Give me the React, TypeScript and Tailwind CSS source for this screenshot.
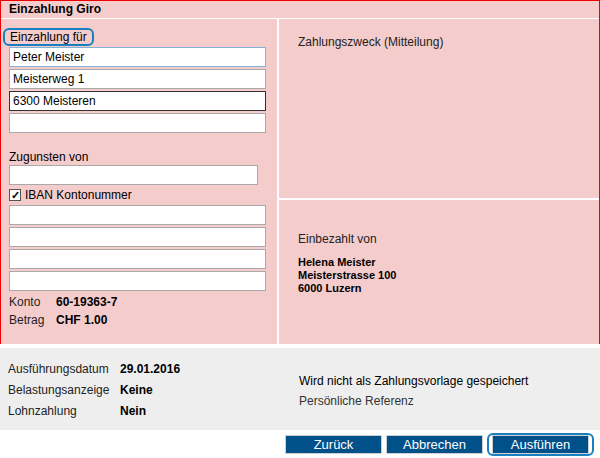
const font = { fontFamily: '"Liberation Sans", Arial, sans-serif' };

function Field({ value = '', w = 'w-[257px]', border = 'border-[#a9a9a9]' }: { value?: string; w?: string; border?: string }) {
  return (
    <div className={`${w} h-[20px] bg-white border ${border} px-[3px] text-[12px] leading-[18px] text-black`}>{value}</div>
  );
}

export default function App() {
  return (
    <div style={font} className="w-[600px] h-[458px] bg-white text-[12px] text-[#222] overflow-hidden">
      <div className="bg-[#f4cccc] border-t border-l border-r border-[#e00] ">
        <div className="h-[18px] px-[8px] font-bold text-[12px] leading-[16px] text-black border-b border-white">Einzahlung Giro</div>
        <div className="flex h-[325px]">
          <div className="w-[278px] border-r-2 border-white pl-[8px] pt-[9px]">
            <div className="relative w-fit -ml-[6px] px-[5px] border-2 border-[#1a7fc1] rounded-[6px] leading-[14px] text-black">Einzahlung für</div>
            <div className="flex flex-col gap-[2px] mt-[1px]">
              <Field value="Peter Meister" border="border-[#7fb2d6]" />
              <Field value="Meisterweg 1" />
              <Field value="6300 Meisteren" border="border-[#333]" />
              <Field />
            </div>
            <div className="mt-[17px] leading-[14px] text-black">Zugunsten von</div>
            <div className="mt-[1px]"><Field w="w-[249px]" /></div>
            <div className="flex items-center gap-[4px] mt-[3px] h-[14px] text-black">
              <span className="w-[12px] h-[12px] bg-white border border-[#555] flex items-center justify-center text-[11px] font-bold leading-none">✓</span>
              IBAN Kontonummer
            </div>
            <div className="flex flex-col gap-[2px] mt-[3px]">
              <Field /><Field /><Field /><Field />
            </div>
            <div className="flex mt-[3px] leading-[16px]"><span className="w-[47px]">Konto</span><b className="text-black">60-19363-7</b></div>
            <div className="flex mt-[2px] leading-[16px]"><span className="w-[47px]">Betrag</span><b className="text-black">CHF 1.00</b></div>
          </div>
          <div className="flex-1 flex flex-col">
            <div className="h-[181px] border-b-2 border-white px-[19px] pt-[14px]">Zahlungszweck (Mitteilung)</div>
            <div className="flex-1 px-[19px] pt-[30px]">
              <div>Einbezahlt von</div>
              <div className="mt-[8px] font-bold text-black leading-[13px] text-[11px]">
                <div>Helena Meister</div><div>Meisterstrasse 100</div><div>6000 Luzern</div>
              </div>
            </div>
          </div>
        </div>
      </div>
      <div className="mt-[4px] h-[82px] bg-[#eeeeee] flex">
        <div className="w-[290px] pl-[8px] pt-[12px] flex flex-col gap-[3px] leading-[18px]">
          <div className="flex"><span className="w-[112px]">Ausführungsdatum</span><b className="text-black">29.01.2016</b></div>
          <div className="flex"><span className="w-[112px]">Belastungsanzeige</span><b className="text-black">Keine</b></div>
          <div className="flex"><span className="w-[112px]">Lohnzahlung</span><b className="text-black">Nein</b></div>
        </div>
        <div className="pl-[9px] pt-[24px] flex flex-col gap-[2px] leading-[18px] text-black">
          <div>Wird nicht als Zahlungsvorlage gespeichert</div>
          <div className="text-[#333]">Persönliche Referenz</div>
        </div>
      </div>
      <div className="flex justify-end gap-[4px] pr-[6px] mt-[5px]">
        <button className="w-[97px] h-[19px] bg-[#00508a] border border-[#d0d0d0] text-white text-[13px] leading-none">Zurück</button>
        <button className="w-[97px] h-[19px] bg-[#00508a] border border-[#d0d0d0] text-white text-[13px] leading-none">Abbrechen</button>
        <div className="border-2 border-[#1a7fc1] rounded-[6px] -my-[2px] px-[3px] flex items-center">
          <button className="w-[97px] h-[19px] bg-[#00508a] border border-[#d0d0d0] text-white text-[13px] leading-none">Ausführen</button>
        </div>
      </div>
    </div>
  );
}
